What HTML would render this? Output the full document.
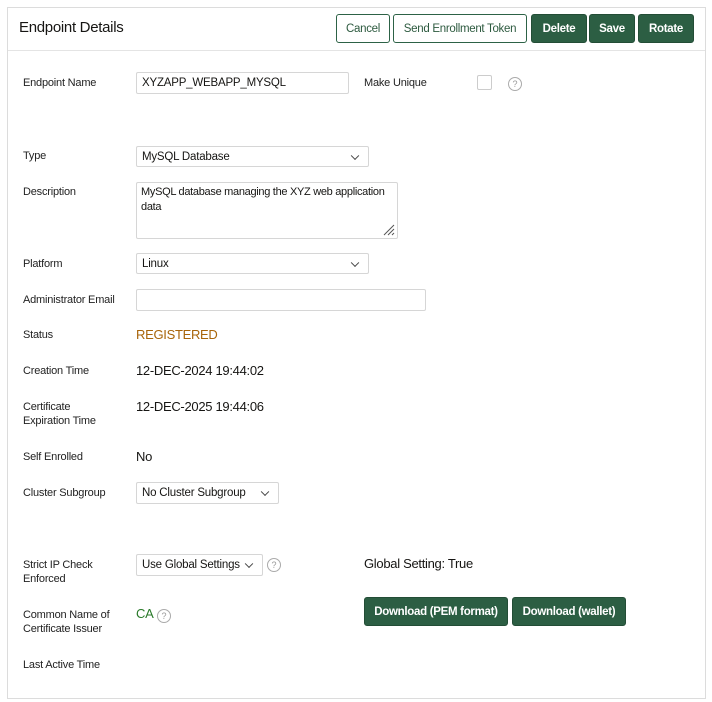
<!DOCTYPE html>
<html><head><style>
*{box-sizing:border-box;margin:0;padding:0}
body{width:712px;height:702px;background:#fff;font-family:"Liberation Sans",sans-serif;position:relative;overflow:hidden;color:#161513}
.a{position:absolute}
.panel{left:7px;top:7px;width:699px;height:692px;border:1px solid #dcdcdc}
.hdr{left:8px;top:50px;width:697px;height:1px;background:#e4e4e4}
.btn{position:absolute;top:14px;height:29px;border-radius:3px;font-size:11.5px;display:flex;align-items:center;justify-content:center;letter-spacing:-0.3px}
.o{border:1px solid #2d6246;color:#2d5a3f;background:#fff}
.g{background:#2c5e43;color:#fff;font-weight:bold;border:1px solid #234d36}
.lbl{position:absolute;left:23px;font-size:11px;line-height:14px;letter-spacing:-0.2px;color:#222;margin-top:1px}
.in{position:absolute;border:1px solid #d6d6d6;border-radius:2px;font-size:11.5px;padding:0 5px;display:flex;align-items:center;letter-spacing:-0.2px;background:#fff}
.chev{position:absolute;right:10px;top:50%;width:6px;height:6px;border-right:1.2px solid #444;border-bottom:1.2px solid #444;transform:translateY(-70%) rotate(45deg)}
.val{position:absolute;left:136px;font-size:13px;letter-spacing:-0.3px}
.q{position:absolute;width:14px;height:14px;border:1px solid #aaa;border-radius:50%;font-size:9px;color:#999;text-align:center;line-height:12px}
</style></head><body>
<div class="a panel"></div>
<div class="a hdr"></div>
<div class="a" style="left:19px;top:19px;font-size:15px;letter-spacing:-0.3px">Endpoint Details</div>
<div class="btn o" style="left:336px;width:54px">Cancel</div>
<div class="btn o" style="left:393px;width:134px">Send Enrollment Token</div>
<div class="btn g" style="left:531px;width:56px">Delete</div>
<div class="btn g" style="left:589px;width:46px">Save</div>
<div class="btn g" style="left:638px;width:56px">Rotate</div>

<div class="lbl" style="top:75px">Endpoint Name</div>
<div class="in" style="left:136px;top:72px;width:213px;height:22px">XYZAPP_WEBAPP_MYSQL</div>
<div class="lbl" style="left:364px;top:75px">Make Unique</div>
<div class="a" style="left:477px;top:75px;width:15px;height:15px;border:1px solid #ccc;border-radius:2px"></div>
<div class="q" style="left:508px;top:77px">?</div>

<div class="lbl" style="top:148px">Type</div>
<div class="in" style="left:136px;top:146px;width:233px;height:21px">MySQL Database<span class="chev"></span></div>
<div class="lbl" style="top:184px">Description</div>
<div class="in" style="left:136px;top:182px;width:262px;height:57px;align-items:flex-start;padding:2px 3px 0 4px;line-height:15px;font-size:11px;letter-spacing:-0.3px">MySQL database managing the XYZ web application data
<svg class="a" style="right:2px;bottom:2px" width="12" height="12"><path d="M11 1L1 11M11 5L5 11M11 9L9 11" stroke="#555" stroke-width="1"/></svg></div>
<div class="lbl" style="top:256px">Platform</div>
<div class="in" style="left:136px;top:253px;width:233px;height:21px">Linux<span class="chev"></span></div>
<div class="lbl" style="top:292px">Administrator Email</div>
<div class="in" style="left:136px;top:289px;width:290px;height:22px"></div>
<div class="lbl" style="top:327px">Status</div>
<div class="val" style="top:327px;color:#a8650a">REGISTERED</div>
<div class="lbl" style="top:363px">Creation Time</div>
<div class="val" style="top:363px">12-DEC-2024 19:44:02</div>
<div class="lbl" style="top:399px">Certificate<br>Expiration Time</div>
<div class="val" style="top:399px">12-DEC-2025 19:44:06</div>
<div class="lbl" style="top:449px">Self Enrolled</div>
<div class="val" style="top:449px">No</div>
<div class="lbl" style="top:485px">Cluster Subgroup</div>
<div class="in" style="left:136px;top:482px;width:143px;height:22px">No Cluster Subgroup<span class="chev"></span></div>

<div class="lbl" style="top:557px">Strict IP Check<br>Enforced</div>
<div class="in" style="left:136px;top:554px;width:127px;height:22px">Use Global Settings<span class="chev"></span></div>
<div class="q" style="left:267px;top:558px">?</div>
<div class="a" style="left:364px;top:556px;font-size:13px;letter-spacing:-0.3px">Global Setting: True</div>
<div class="lbl" style="top:607px">Common Name of<br>Certificate Issuer</div>
<div class="val" style="top:606px;color:#2a7a2a">CA</div>
<div class="q" style="left:157px;top:609px">?</div>
<div class="btn g" style="left:364px;top:597px;width:144px;height:29px">Download (PEM format)</div>
<div class="btn g" style="left:512px;top:597px;width:114px;height:29px">Download (wallet)</div>
<div class="lbl" style="top:657px">Last Active Time</div>
</body></html>
